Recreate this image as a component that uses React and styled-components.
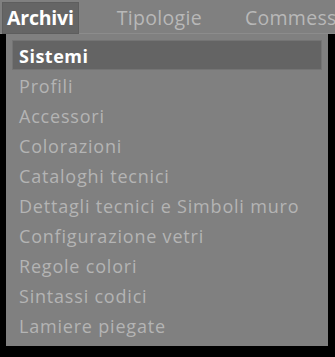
import styled, { createGlobalStyle } from "styled-components";

const GlobalStyle = createGlobalStyle`
	html, body {
		margin: 0;
		padding: 0;
		background: #000;
	}
	body {
		font-family: "Open Sans", "Noto Sans", sans-serif;
	}
`;

const topMenus = ["Archivi", "Tipologie", "Commesse"];
const items = [
	"Sistemi",
	"Profili",
	"Accessori",
	"Colorazioni",
	"Cataloghi tecnici",
	"Dettagli tecnici e Simboli muro",
	"Configurazione vetri",
	"Regole colori",
	"Sintassi codici",
	"Lamiere piegate",
];

function App() {
	return (
		<Page>
			<GlobalStyle />
			<MenuBar>
				{topMenus.map((m, i) => (
					<TopItem key={m} active={i === 0}>
						{m}
					</TopItem>
				))}
			</MenuBar>
			<Dropdown>
				{items.map((it, i) => (
					<DropItem key={it} selected={i === 0}>
						{it}
					</DropItem>
				))}
			</Dropdown>
		</Page>
	);
}

const Page = styled.div`
	width: 335px;
	height: 357px;
	background: #000;
	overflow: hidden;
`;
const MenuBar = styled.div`
	height: 34px;
	background: #808080;
	border-bottom: 1px solid #8c8c8c;
	display: flex;
	align-items: flex-start;
	padding: 2px 0 0 2px;
	box-sizing: border-box;
	gap: 33px;
	white-space: nowrap;
`;
const TopItem = styled.div`
	height: 30px;
	line-height: 29px;
	padding: 0 4px;
	font-size: 19.5px;
	letter-spacing: ${(p) => (p.active ? "-0.2px" : "0.3px")};
	font-weight: ${(p) => (p.active ? 700 : 400)};
	color: ${(p) => (p.active ? "#ffffff" : "#b8b8b8")};
	background: ${(p) => (p.active ? "#656565" : "transparent")};
	border: 1px solid ${(p) => (p.active ? "#5e5e5e" : "transparent")};
`;
const Dropdown = styled.div`
	margin: 0 7px 0 6px;
	height: 312px;
	background: #808080;
	padding: 6px;
	box-sizing: border-box;
	display: flex;
	flex-direction: column;
`;
const DropItem = styled.div`
	height: 30px;
	line-height: 30px;
	padding: 0 6px;
	box-sizing: border-box;
	font-size: 18px;
	letter-spacing: ${(p) => (p.selected ? "0.5px" : "0.8px")};
	white-space: nowrap;
	font-weight: ${(p) => (p.selected ? 700 : 400)};
	color: ${(p) => (p.selected ? "#ffffff" : "#b4b4b4")};
	background: ${(p) => (p.selected ? "#646464" : "transparent")};
	border: 1px solid ${(p) => (p.selected ? "#747474" : "transparent")};
`;

export default App;
